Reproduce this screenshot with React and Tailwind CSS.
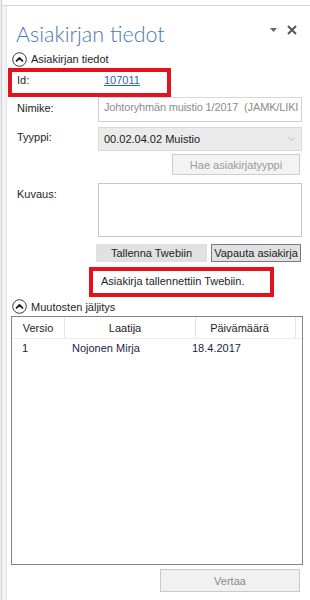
import React from "react";

function CircleUp() {
  return (
    <svg width="15" height="15" viewBox="0 0 15 15" className="shrink-0">
      <circle cx="7.5" cy="7.5" r="6.8" fill="white" stroke="#3a3a3a" strokeWidth="1" />
      <path d="M4.6 8.9 L7.5 6 L10.4 8.9" fill="none" stroke="#222" strokeWidth="1.9" strokeLinecap="round" strokeLinejoin="round" />
    </svg>
  );
}

export default function App() {
  return (
    <div className="w-[310px] h-[600px] bg-white flex overflow-hidden text-[11px] leading-[14px] text-[#1e1e1e] font-['Liberation_Sans',Arial,sans-serif]">
      {/* far-left strip */}
      <div className="w-[3px] shrink-0 flex">
        <div className="w-[1px] bg-[#ececec]" />
        <div className="w-[1px] bg-[#d2d2d2]" />
        <div className="w-[1px] bg-[#f2f2f2]" />
      </div>
      <div className="flex-1 flex flex-col pt-[5px]">
        <div className="flex-1 flex border-t border-[#d6d6d6]">
          <div className="w-[4px] shrink-0 flex">
            <div className="w-[3px] bg-[#f3f3f3]" />
            <div className="w-[1px] bg-[#e3e3e3]" />
          </div>
          <div className="flex-1 flex flex-col">
            {/* title row */}
            <div className="mt-[14px] h-[28px] flex justify-between pl-[9px] pr-[13px]">
              <div className="text-[21.5px] leading-[28px] font-light text-[#4a77b1] font-['Lato','Liberation_Sans',sans-serif]">
                Asiakirjan tiedot
              </div>
              <div className="flex items-center gap-[10px] mt-[5px] h-[10px]">
                <svg width="7" height="4" viewBox="0 0 7 4">
                  <path d="M0 0 H7 L3.5 4 Z" fill="#666" />
                </svg>
                <svg width="10" height="10" viewBox="0 0 10 10">
                  <path d="M1 1 L9 9 M9 1 L1 9" stroke="#555" strokeWidth="2" />
                </svg>
              </div>
            </div>

            {/* section header 1 */}
            <div className="mt-[2px] h-[18px] flex items-center pl-[5px] gap-[4px]">
              <CircleUp />
              <span>Asiakirjan tiedot</span>
            </div>

            {/* Id row (annotated) */}
            <div className="ml-[1px] w-[163px] h-[29px] border-4 border-[#e3121c] flex items-start pl-[5px] pt-[1px]">
              <span className="w-[87px] shrink-0">Id:</span>
              <span className="text-[#2b66b3] underline">107011</span>
            </div>

            {/* Nimike */}
            <div className="flex pl-[10px]">
              <span className="w-[81px] shrink-0 pt-[4px]">Nimike:</span>
              <div className="w-[204px] h-[25px] border border-[#cfcfcf] border-t-[#d8d8d8] pl-[5px] pt-[2px] overflow-hidden whitespace-nowrap text-[#8c8c8c] tracking-[-0.15px]">
                Johtoryhmän muistio 1/2017&nbsp;&nbsp;(JAMK/LIKI
              </div>
            </div>

            {/* Tyyppi */}
            <div className="flex pl-[10px] mt-[5px]">
              <span className="w-[81px] shrink-0 pt-[3px]">Tyyppi:</span>
              <div className="w-[204px] h-[24px] border border-[#d9d9d9] bg-[#ebebeb] pl-[5px] flex items-center justify-between pr-[6px]">
                <span className="text-[#1a1a1a]">00.02.04.02 Muistio</span>
                <svg width="7" height="4" viewBox="0 0 7 4">
                  <path d="M0.5 0.5 L3.5 3.5 L6.5 0.5" fill="none" stroke="#b5b5b5" strokeWidth="1" />
                </svg>
              </div>
            </div>

            {/* Hae button */}
            <div className="flex justify-end pr-[10px] mt-[3px]">
              <div className="w-[128px] h-[21px] border border-[#cccccc] bg-[#f3f3f3] text-[#9a9a9a] flex items-center justify-center">
                Hae asiakirjatyyppi
              </div>
            </div>

            {/* Kuvaus */}
            <div className="flex pl-[10px] mt-[8px]">
              <span className="w-[81px] shrink-0 pt-[4px]">Kuvaus:</span>
              <div className="w-[204px] h-[54px] border border-[#c7c7c7] bg-white" />
            </div>

            {/* action buttons */}
            <div className="flex pl-[89px] mt-[7px] gap-[4px]">
              <div className="w-[111px] h-[18px] bg-[#e1e1e1] border border-[#dedede] flex items-center justify-center">
                Tallenna Twebiin
              </div>
              <div className="w-[90px] h-[18px] bg-[#e1e1e1] border border-[#7a7a7a] flex items-center justify-center whitespace-nowrap">
                Vapauta asiakirja
              </div>
            </div>

            {/* message (annotated) */}
            <div className="ml-[82px] mt-[5px] w-[185px] h-[30px] border-4 border-[#e3121c] pl-[8px] pt-[3px]">
              Asiakirja tallennettiin Twebiin.
            </div>

            {/* section header 2 */}
            <div className="h-[19px] flex items-center pl-[5px] gap-[4px]">
              <CircleUp />
              <span>Muutosten jäljitys</span>
            </div>

            {/* table */}
            <div className="ml-[4px] w-[292px] h-[249px] border border-[#848484] flex flex-col">
              <div className="h-[22px] flex border-b border-[#ededed] text-[#1e1e1e]">
                <div className="w-[53px] border-r border-[#e6e6e6] flex items-center justify-center">Versio</div>
                <div className="w-[131px] border-r border-[#e6e6e6] flex items-center justify-center pr-[10px]">Laatija</div>
                <div className="w-[100px] border-r border-[#e6e6e6] flex items-center justify-center pr-[12px]">Päivämäärä</div>
                <div className="flex-1" />
              </div>
              <div className="h-[17px] flex items-center text-[#1b1d4d]">
                <span className="w-[60px] pl-[10px]">1</span>
                <span className="w-[120px]">Nojonen Mirja</span>
                <span>18.4.2017</span>
              </div>
            </div>

            {/* Vertaa */}
            <div className="flex justify-end pr-[10px] mt-[4px]">
              <div className="w-[140px] h-[23px] border border-[#c9c9c9] bg-[#f1f1f1] text-[#8a8a8a] flex items-center justify-center">
                Vertaa
              </div>
            </div>
          </div>
        </div>
      </div>
    </div>
  );
}
